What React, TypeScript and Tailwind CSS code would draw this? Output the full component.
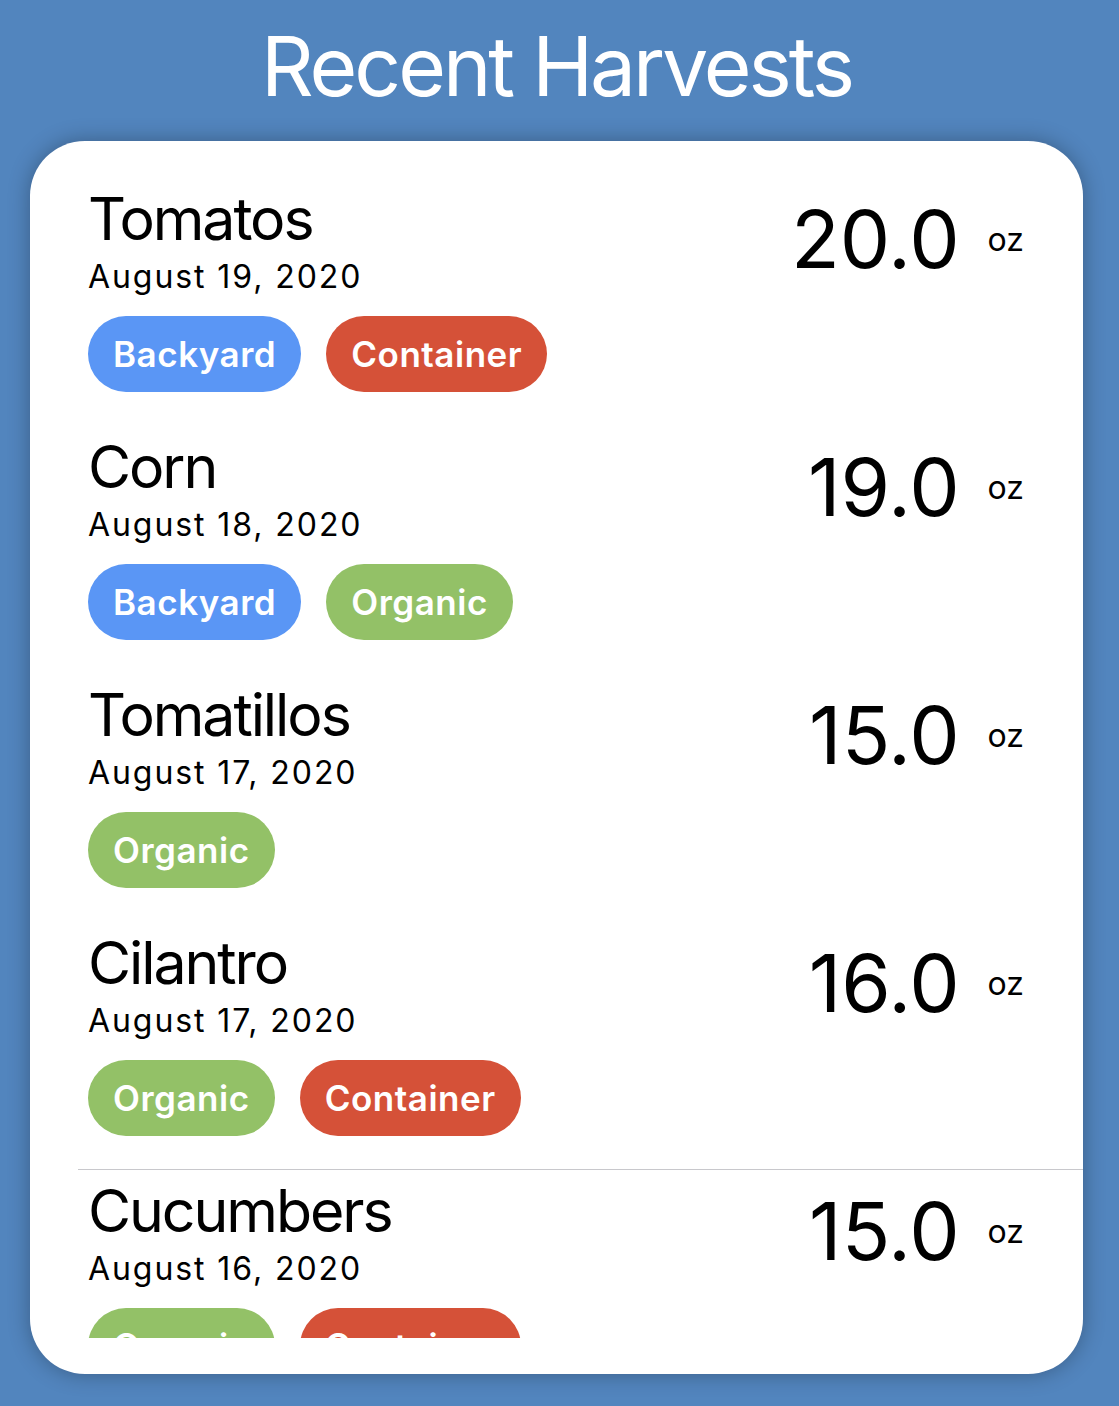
import React from "react";

type Tag = "Backyard" | "Container" | "Organic";

const tagClass: Record<Tag, string> = {
  Backyard: "bg-[#5a96f5]",
  Container: "bg-[#d55138]",
  Organic: "bg-[#93c167]",
};

const rows: { name: string; date: string; amount: string; tags: Tag[]; divider?: boolean }[] = [
  { name: "Tomatos", date: "August 19, 2020", amount: "20.0", tags: ["Backyard", "Container"] },
  { name: "Corn", date: "August 18, 2020", amount: "19.0", tags: ["Backyard", "Organic"] },
  { name: "Tomatillos", date: "August 17, 2020", amount: "15.0", tags: ["Organic"] },
  { name: "Cilantro", date: "August 17, 2020", amount: "16.0", tags: ["Organic", "Container"], divider: true },
  { name: "Cucumbers", date: "August 16, 2020", amount: "15.0", tags: ["Organic", "Container"] },
];

export default function App() {
  return (
    <div
      className="w-[1119px] h-[1406px] bg-[#5285be] overflow-hidden pl-[30px] pr-[36px]"
      style={{ fontFamily: "Inter, 'Noto Sans', sans-serif" }}
    >
      <h1 className="pt-[26px] text-center text-white text-[82px] leading-none font-normal tracking-[-0.037em]">
        Recent Harvests
      </h1>
      <div className="mt-[33px] h-[1233px] bg-white rounded-[55px] shadow-[0_0_22px_rgba(0,0,0,0.3)] pb-[36px] flex flex-col">
        <div className="flex-1 overflow-hidden pt-[37px]">
          {rows.map((r, i) => (
            <div
              key={i}
              className={`ml-[48px] pl-[10px] pr-[59px] pt-[11px] pb-[33px] border-b flex justify-between ${
                r.divider ? "border-[#c8c8cc]" : "border-transparent"
              }`}
            >
              <div className="flex flex-col text-black">
                <div className="text-[59px] leading-none tracking-[-0.035em]">{r.name}</div>
                <div className="mt-[13px] text-[32px] leading-none tracking-[0.06em]">{r.date}</div>
                <div className="mt-[23px] flex gap-[25px]">
                  {r.tags.map((t) => (
                    <span
                      key={t}
                      className={`${tagClass[t]} h-[76px] px-[25px] rounded-full flex items-center text-white text-[35px] font-semibold tracking-[0.015em]`}
                    >
                      {t}
                    </span>
                  ))}
                </div>
              </div>
              <div className="flex items-start">
                <div className="mt-[10px] text-[80px] leading-none text-black tracking-normal">{r.amount}</div>
                <div className="ml-[28px] mt-[35px] text-[32px] leading-none text-black">oz</div>
              </div>
            </div>
          ))}
        </div>
      </div>
    </div>
  );
}
